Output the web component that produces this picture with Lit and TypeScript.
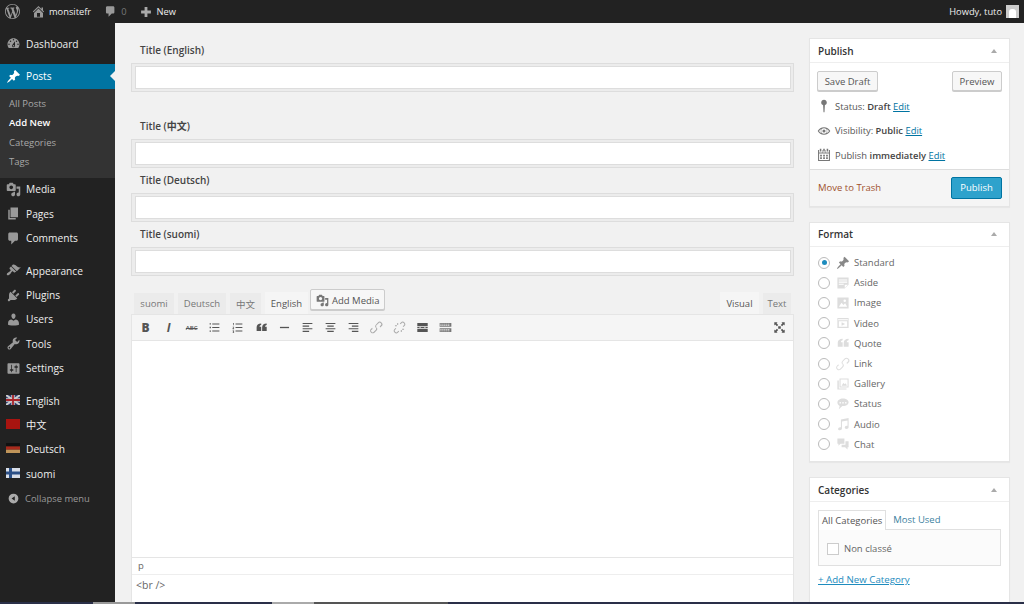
import { LitElement, html, css, svg } from "lit";
import { customElement } from "lit/decorators.js";

const P: Record<string, string> = {
  wp: "M20 10c0-5.51-4.49-10-10-10C4.48 0 0 4.49 0 10c0 5.52 4.48 10 10 10 5.51 0 10-4.48 10-10zM7.78 15.37L4.37 6.22c.55-.02 1.17-.08 1.17-.08.5-.06.44-1.13-.06-1.11 0 0-1.45.11-2.37.11-.18 0-.37 0-.58-.01C4.12 2.69 6.87 1.11 10 1.11c2.33 0 4.45.87 6.05 2.34-.68-.11-1.65.39-1.65 1.58 0 .74.45 1.36.9 2.1.35.61.55 1.36.55 2.46 0 1.49-1.4 5-1.4 5l-3.03-8.37c.54-.02.82-.17.82-.17.5-.05.44-1.25-.06-1.22 0 0-1.44.12-2.38.12-.87 0-2.33-.12-2.33-.12-.5-.03-.56 1.2-.06 1.22l.92.08 1.26 3.41zM17.41 10c.24-.64.74-1.87.43-4.25.7 1.29 1.05 2.71 1.05 4.25 0 3.29-1.73 6.24-4.4 7.78.97-2.59 1.94-5.2 2.92-7.78zM6.1 18.09C3.12 16.65 1.11 13.53 1.11 10c0-1.3.23-2.48.72-3.59C3.25 10.3 4.67 14.2 6.1 18.09zm4.03-6.63l2.58 6.98c-.86.29-1.76.45-2.71.45-.79 0-1.57-.11-2.29-.33.81-2.38 1.62-4.74 2.42-7.1z",
  home: "M16 8.5l1.53 1.53-1.06 1.06L10 4.62l-6.47 6.47-1.06-1.06L10 2.5l4 4v-2h2v4zm-6-2.46l6 5.99V18H4v-5.97zM12 17v-5H8v5h4z",
  plus: "M17 8v4h-5v5H8v-5H3V8h5V3h4v5h5z",
  dashboard: "M3.76 16h12.48c1.1-1.37 1.76-3.11 1.76-5 0-4.42-3.58-8-8-8s-8 3.58-8 8c0 1.89.66 3.63 1.76 5zM10 4c.55 0 1 .45 1 1s-.45 1-1 1-1-.45-1-1 .45-1 1-1zM6 6c.55 0 1 .45 1 1s-.45 1-1 1-1-.45-1-1 .45-1 1-1zm8 0c.55 0 1 .45 1 1s-.45 1-1 1-1-.45-1-1 .45-1 1-1zm-5.37 5.55L12 7v6c0 1.1-.9 2-2 2s-2-.9-2-2c0-.57.24-1.08.63-1.45zM4 10c.55 0 1 .45 1 1s-.45 1-1 1-1-.45-1-1 .45-1 1-1zm12 0c.55 0 1 .45 1 1s-.45 1-1 1-1-.45-1-1 .45-1 1-1zm-5 3c0-.55-.45-1-1-1s-1 .45-1 1 .45 1 1 1 1-.45 1-1z",
  pin: "M10.44 3.02l1.82-1.82 6.36 6.35-1.83 1.82c-1.05-.68-2.48-.57-3.41.36l-.75.75c-.92.93-1.04 2.35-.35 3.41l-1.83 1.82-2.41-2.41-2.8 2.79c-.42.42-3.38 2.71-3.8 2.29s1.86-3.39 2.28-3.81l2.79-2.79L4.1 9.36l1.83-1.82c1.05.69 2.48.57 3.4-.36l.75-.75c.93-.92 1.05-2.35.36-3.41z",
  media: "M13 11V4c0-.55-.45-1-1-1h-1.67L9 1H5L3.67 3H2c-.55 0-1 .45-1 1v7c0 .55.45 1 1 1h10c.55 0 1-.45 1-1zM7 4.5c1.38 0 2.5 1.12 2.5 2.5S8.38 9.5 7 9.5 4.5 8.38 4.5 7 5.62 4.5 7 4.5zM14 6h5v10.5c0 1.38-1.12 2.5-2.5 2.5S14 17.88 14 16.5s1.12-2.5 2.5-2.5c.17 0 .34.02.5.05V9h-3V6zm-4 8.05V13h2v3.5c0 1.38-1.12 2.5-2.5 2.5S7 17.88 7 16.5 8.12 14 9.5 14c.17 0 .34.02.5.05z",
  pages: "M6 15V2h10v13H6zm-1 1h8v2H3V5h2v11z",
  comment: "M5 2h9c1.1 0 2 .9 2 2v7c0 1.1-.9 2-2 2h-2l-5 5v-5H5c-1.1 0-2-.9-2-2V4c0-1.1.9-2 2-2z",
  appearance: "M14.48 11.06L7.41 3.99l1.5-1.5c.5-.56 2.3-.47 3.51.32 1.21.8 1.43 1.28 2.91 2.1 1.18.64 2.45 1.26 4.45.85zm-.71.71L6.7 4.7 4.93 6.47c-.39.39-.39 1.02 0 1.41l1.06 1.06c.39.39.39 1.03 0 1.42-.6.6-1.43 1.11-2.21 1.69-.35.26-.7.53-1.01.84C1.43 13.23.4 14.98 1.4 15.98s2.75-.03 4.09-1.36c.31-.31.58-.66.85-1.02.57-.78 1.08-1.6 1.69-2.21.39-.39 1.02-.39 1.41 0l1.06 1.06c.39.39 1.02.39 1.41 0z",
  plugins: "M13.11 4.36L9.87 7.6 8 5.73l3.24-3.24c.35-.34 1.05-.2 1.56.32.52.51.66 1.21.31 1.55zm-8 1.77l.91-1.12 9.01 9.01-1.19.84c-.71.71-2.63 1.16-3.82 1.16H6.14L4.9 17.26c-.59.59-1.54.59-2.12 0-.59-.58-.59-1.53 0-2.12l1.24-1.24v-3.88c0-1.13.4-3.19 1.09-3.89zm7.26 3.97l3.24-3.24c.34-.35 1.04-.21 1.55.31.52.51.66 1.21.31 1.55l-3.24 3.25z",
  users: "M10 9.25c-2.27 0-2.73-3.44-2.73-3.44C7 4.02 7.82 2 9.97 2c2.16 0 2.98 2.02 2.71 3.81 0 0-.41 3.44-2.68 3.44zm0 2.57L12.72 10c2.39 0 4.52 2.33 4.52 4.53v2.49s-3.65 1.13-7.24 1.13c-3.65 0-7.24-1.13-7.24-1.13v-2.49c0-2.25 1.94-4.48 4.47-4.48z",
  tools: "M16.68 9.77c-1.34 1.34-3.3 1.67-4.95.99l-5.41 6.52c-.99.99-2.59.99-3.58 0s-.99-2.59 0-3.57l6.52-5.42c-.68-1.65-.35-3.61.99-4.95 1.28-1.28 3.12-1.62 4.72-1.06l-2.89 2.89 2.82 2.82 2.86-2.87c.53 1.58.18 3.39-1.08 4.65zM3.81 16.21c.4.39 1.04.39 1.43 0 .4-.4.4-1.04 0-1.43-.39-.4-1.03-.4-1.43 0-.39.39-.39 1.03 0 1.43z",
  settings: "M18 16V4c0-.55-.45-1-1-1H3c-.55 0-1 .45-1 1v12c0 .55.45 1 1 1h14c.55 0 1-.45 1-1zM8 11h1c.55 0 1 .45 1 1s-.45 1-1 1H8v1.5c0 .28-.22.5-.5.5s-.5-.22-.5-.5V13H6c-.55 0-1-.45-1-1s.45-1 1-1h1V5.5c0-.28.22-.5.5-.5s.5.22.5.5V11zm5-2h-1c-.55 0-1-.45-1-1s.45-1 1-1h1V5.5c0-.28.22-.5.5-.5s.5.22.5.5V7h1c.55 0 1 .45 1 1s-.45 1-1 1h-1v5.5c0 .28-.22.5-.5.5s-.5-.22-.5-.5V9z",
  collapse: "M10 2.5a7.5 7.5 0 1 0 0 15 7.5 7.5 0 0 0 0-15zM12 6.5v7L7 10z",
  location: "M10 1c-2.300 0-4 1.700-4 3.900 0 1.800 1.100 3.200 2.700 3.700L9.300 19h1.400l.6-10.400c1.600-.5 2.700-1.900 2.700-3.700C14 2.700 12.300 1 10 1z",
  eye: "M10 4.500c-4 0-7.200 2.400-9 5.500 1.800 3.100 5 5.500 9 5.500s7.200-2.400 9-5.500c-1.800-3.100-5-5.500-9-5.500zm0 9.500a4 4 0 1 1 0-8 4 4 0 0 1 0 8zm0-6.200a2.200 2.200 0 1 0 0 4.400 2.200 2.200 0 0 0 0-4.400zM2.800 10c.9-1.300 2-2.300 3.400-3a5.200 5.200 0 0 0 0 6c-1.400-.7-2.500-1.700-3.400-3zm14.400 0c-.9 1.300-2 2.300-3.400 3a5.200 5.200 0 0 0 0-6c1.400.7 2.500 1.700 3.400 3z",
  calendar: "M4 1h2.200v4H4zM8.900 1h2.200v4H8.900zM13.800 1H16v4h-2.200zM1.500 3H3v3.500h4.200V3h.7v3.500h4.200V3h.7v3.500H17V3h1.500v15.500h-17zM3 8v9h14V8zM4.500 9.500h2.500v2.500H4.500zM8.800 9.500h2.500v2.500H8.800zM13 9.500h2.500v2.500H13zM4.500 13.300h2.500v2.500H4.500zM8.800 13.300h2.500v2.500H8.800zM13 13.300h2.500v2.500H13z",
  aside: "M2 2h16v10.500L12.500 18H2zM4 5v1.500h12V5zM4 8v1.500h12V8zM4 11v1.500h7V11zM12.500 17v-4.500H17z",
  image: "M2 2h16v16H2zM4 15.500h12l-3-5-2.500 2.500L8 9.500zM12.500 5a1.800 1.800 0 1 0 0 3.600 1.800 1.800 0 0 0 0-3.600z",
  video: "M2 3h16v14H2zM3 4.500V6h14V4.500zM4 7.500v8h12v-8zM8 9l5 2.500L8 14z",
  quote: "M9.500 4v2.200C7.500 6.700 7 7.800 7 9h2.500v6.500H2.500V9.500C2.500 6.500 5 4 9.500 4zm8.500 0v2.200c-2 .5-2.500 1.600-2.500 2.800H18v6.500h-7V9.500C11 6.500 13.500 4 18 4z",
  link: "M17.700 2.300a3.900 3.900 0 0 0-5.500 0L9.300 5.200a3.900 3.900 0 0 0 0 5.500l1-1a2.400 2.400 0 0 1 0-3.500l2.900-2.900a2.400 2.400 0 0 1 3.400 3.400L15 8.300l.7 1.800 2-2a3.900 3.900 0 0 0 0-5.800zM9.700 9.300l-1 1a2.400 2.400 0 0 1 0 3.500l-2.900 2.900a2.400 2.400 0 0 1-3.400-3.400L4 12.200l-.7-1.800-2 2a3.900 3.900 0 0 0 5.500 5.500l2.900-2.900a3.900 3.900 0 0 0 0-5.700z",
  unlink: "M17.700 2.300a3.900 3.900 0 0 0-5.500 0L10.500 4l1 1 1.700-1.700a2.400 2.400 0 0 1 3.400 3.400L15 8.400l1 1 1.700-1.700a3.900 3.900 0 0 0 0-5.400zM2.300 17.700a3.900 3.900 0 0 0 5.500 0L9.500 16l-1-1-1.700 1.700a2.400 2.400 0 0 1-3.400-3.400L5 11.600l-1-1-1.700 1.700a3.900 3.900 0 0 0 0 5.400zM3 6.500h3V8H3zM6.500 3H8v3H6.500zM14 12h3v1.500h-3zM12 14h1.500v3H12z",
  gallery: "M5 2h13v13H5zM6.500 3.500v10h10v-10zM2 5h2v11.500h11V18H2zM8 12.500l2.500-4 2 2 1.500-1.500 1.500 3.500z",
  status: "M10 2C5.600 2 2 4.700 2 8c0 2 1.300 3.700 3.300 4.800L4 17.500l5-4.500h1c4.400 0 8-2.300 8-5.500S14.400 2 10 2zM6 7a1.200 1.200 0 1 1 0 2.400A1.200 1.200 0 0 1 6 7zm4 0a1.200 1.200 0 1 1 0 2.400A1.200 1.200 0 0 1 10 7zm4 0a1.200 1.200 0 1 1 0 2.400A1.200 1.200 0 0 1 14 7z",
  audio: "M7 3.500 18 1.500v13c0 1.400-1.300 2.500-3 2.500s-2.500-1-2.500-2 1-2.500 3-2.500c.4 0 .7 0 1 .1V5L8.500 6.500v10c0 1.400-1.300 2.500-3 2.500S3 18 3 17s1-2.500 3-2.500c.4 0 .7 0 1 .1z",
  chat: "M2 2h10v7.500H6.500L3.500 12.500V9.500H2zM13.500 6H18v8.500h-1.500V18l-3.500-3.500H8V11h5.500z",
  fullscreen: "M2 2h5L5.500 3.500 8 6 6 8 3.500 5.500 2 7zM18 2v5l-1.500-1.500L14 8l-2-2 2.500-2.500L13 2zM2 18v-5l1.500 1.500L6 12l2 2-2.500 2.500L7 18zM18 18h-5l1.500-1.500L12 14l2-2 2.500 2.500L18 13zM8 8h4v4H8z",
  ul: "M6.500 4h11v1.200h-11zM6.500 9.400h11v1.200h-11zM6.500 14.800h11V16h-11zM2.500 3.500h2v2h-2zM2.500 9h2v2h-2zM2.500 14.500h2v2h-2z",
  ol: "M7 4h10.500v1.200H7zM7 9.400h10.500v1.200H7zM7 14.800h10.500V16H7zM3 3h1.500v3.500H3.500V4H3zM2.500 9h2.200v2.500H3.500v.5h1.200v.8h-2.200v-2.100h1.200v-.9H2.500zM2.500 14.500h2.200v4h-2.200v-.8h1.200v-.8H2.800v-.7h.9v-.9H2.500z",
  hr: "M3 9h14v2H3z",
  left: "M2.500 3h15v1.800h-15zM2.500 7h10v1.800h-10zM2.500 11h15v1.800h-15zM2.500 15h10v1.800h-10z",
  center: "M2.500 3h15v1.800h-15zM5 7h10v1.800H5zM2.500 11h15v1.800h-15zM5 15h10v1.800H5z",
  right: "M2.500 3h15v1.800h-15zM7.500 7h10v1.800h-10zM2.500 11h15v1.800h-15zM7.500 15h10v1.800h-10z",
  more: "M2 3h16v5H2zM2 12h16v5H2zM2 9.200h3.500v1.600H2zM7 9.200h6v1.600H7zM14.500 9.200H18v1.600h-3.500z",
  kitchen: "M1 3h18v6H1zM2 4.200v1.300h2V4.200zm3 0v1.300h2V4.200zm3 0v1.300h2V4.200zm3 0v1.300h2V4.200zm3 0v1.300h2V4.200zM2 6.500v1.300h2V6.500zm3 0v1.300h2V6.500zm3 0v1.300h2V6.500zm3 0v1.300h2V6.500zm3 0v1.300h2V6.500zM1 11h18v6H1zM2 12.200v1.300h2v-1.300zm3 0v1.300h2v-1.300zm3 0v1.300h2v-1.300zm3 0v1.300h2v-1.300zm3 0v1.300h2v-1.300zM2 14.500v1.300h2v-1.300zm3 0v1.300h2v-1.300zm3 0v1.300h2v-1.300zm3 0v1.300h2v-1.300zm3 0v1.300h2v-1.300z",
};

const ico = (n: string, cls = "") =>
  html`<svg class="ico ${cls}" viewBox="0 0 20 20" aria-hidden="true"><path fill-rule="evenodd" d=${P[n]}></path></svg>`;

const flags: Record<string, unknown> = {
  gb: svg`<rect width="14" height="10" fill="#2c3c70"/><path d="M0 0l14 10M14 0L0 10" stroke="#ccc" stroke-width="2"/><path d="M7 0v10M0 5h14" stroke="#ccc" stroke-width="3.400"/><path d="M7 0v10M0 5h14" stroke="#a8242a" stroke-width="1.800"/>`,
  cn: svg`<rect width="14" height="10" fill="#a81410"/>`,
  de: svg`<rect width="14" height="3.400" fill="#111"/><rect y="3.400" width="14" height="3.300" fill="#a82a1c"/><rect y="6.700" width="14" height="3.300" fill="#c0955a"/>`,
  fi: svg`<rect width="14" height="10" fill="#d8dee8"/><path d="M4.500 0v10M0 5h14" stroke="#2b4f86" stroke-width="3"/>`,
};

const menu1 = [
  ["media", "Media"],
  ["pages", "Pages"],
  ["comment", "Comments"],
];
const menu2 = [
  ["appearance", "Appearance"],
  ["plugins", "Plugins"],
  ["users", "Users"],
  ["tools", "Tools"],
  ["settings", "Settings"],
];
const langs = [
  ["gb", "English"],
  ["cn", "中文"],
  ["de", "Deutsch"],
  ["fi", "suomi"],
];
const formats = [
  ["pin", "Standard"],
  ["aside", "Aside"],
  ["image", "Image"],
  ["video", "Video"],
  ["quote", "Quote"],
  ["link", "Link"],
  ["gallery", "Gallery"],
  ["status", "Status"],
  ["audio", "Audio"],
  ["chat", "Chat"],
];
const titles = [
  ["Title (English)", "t0"],
  ["Title (中文)", "t1"],
  ["Title (Deutsch)", "t2"],
  ["Title (suomi)", "t3"],
];

@customElement("app-root")
export class AppRoot extends LitElement {
  static styles = css`
    :host {
      display: block;
      width: 1024px;
      height: 604px;
      overflow: hidden;
      position: relative;
      background: #f1f1f1;
      font-family: "Open Sans", "Noto Sans CJK SC", sans-serif;
      font-size: 10px;
      color: #555;
    }
    * { box-sizing: border-box; }
    .ico { display: block; fill: currentColor; flex: none; }
    a { color: #0074a2; text-decoration: underline; }

    .bar {
      height: 23px;
      background: #222;
      color: #eee;
      display: flex;
      align-items: center;
      padding: 0 5px 0 5px;
      font-size: 9.300px;
    }
    .bar .ico { color: #999; }
    .bar .wp { width: 15px; height: 15px; margin-right: 11px; }
    .bar .hm { width: 15px; height: 15px; margin-right: 3px; }
    .bar .cm { width: 13px; height: 13px; margin: 0 4px 0 13px; }
    .bar .zero { color: #777; }
    .bar .pl { width: 14px; height: 14px; margin: 0 3px 0 13px; color: #aaa; }
    .bar .howdy { margin-left: auto; margin-right: 4px; }
    .avatar {
      width: 13px;
      height: 13px;
      background: #ccc;
      display: flex;
      align-items: flex-end;
      justify-content: center;
    }
    .avatar i { width: 7px; height: 9px; background: #fff; border-radius: 3px 3px 0 0; }

    .layout { display: flex; height: 579px; }
    .side {
      width: 115px;
      flex: none;
      background: #222;
      color: #eee;
      font-size: 10.200px;
      padding-top: 9px;
    }
    .item {
      height: 24.400px;
      display: flex;
      align-items: center;
      padding: 0 0 1px 6px;
      gap: 5px;
    }
    .item .ico { width: 15px; height: 15px; color: #999; }
    .item.cur {
      background: #0074a2;
      color: #fff;
      margin-top: 8px;
      position: relative;
    }
    .item.cur .ico { color: #fff; }
    .item.cur::after {
      content: "";
      position: absolute;
      right: 0;
      top: 7px;
      border: 5px solid transparent;
      border-right-color: #f1f1f1;
      border-left: 0;
    }
    .sub {
      background: #333;
      height: 89px;
      padding: 5px 0 0 9px;
      font-size: 9.500px;
      color: #a8a8a8;
      display: flex;
      flex-direction: column;
    }
    .sub div { height: 19.400px; display: flex; align-items: center; }
    .sub .on { color: #fff; font-weight: 600; }
    .gap { height: 8px; }
    .flag { width: 14px; height: 10px; flex: none; display: block; margin: -2px 1px 0 0; }
    .collapse {
      display: flex;
      align-items: center;
      height: 24px;
      font-size: 9.400px;
      color: #999;
      padding: 1px 0 0 7px;
      gap: 5px;
    }
    .collapse .ico { width: 13px; height: 13px; color: #aaa; }

    .main {
      flex: 1;
      display: flex;
      padding: 15px 14px 0 16px;
      gap: 15px;
      overflow: hidden;
      min-width: 0;
    }
    .col { width: 663px; flex: none; display: flex; flex-direction: column; }
    .label {
      font-size: 10px;
      font-weight: 600;
      color: #444;
      height: 25px;
      padding: 5px 0 0 9px;
      line-height: 14px;
    }
    .input {
      height: 29px;
      border: 1px solid #ddd;
      padding: 2px 2px 2px 3px;
      background: #ececec;
    }
    .input div { height: 100%; background: #fff; border: 1px solid #ddd; }
    .t0 { margin-bottom: 22px; }
    .t3 { margin-bottom: 16px; }

    .tabs { display: flex; align-items: flex-end; height: 22px; position: relative; padding: 0 3px; }
    .tab {
      height: 21px;
      background: #ebebeb;
      color: #777;
      font-size: 9.500px;
      display: flex;
      align-items: center;
      justify-content: center;
      margin-right: 4px;
    }
    .tab.on { background: #f5f5f5; color: #555; height: 22px; }
    .addmedia {
      position: absolute;
      left: 179px;
      top: -3px;
      width: 75px;
      height: 21px;
      border: 1px solid #ccc;
      border-radius: 2px;
      background: #f7f7f7;
      box-shadow: 0 1px 0 #ccc;
      display: flex;
      align-items: center;
      gap: 3px;
      padding: 1px 0 0 5px;
      font-size: 9.500px;
      color: #555;
    }
    .addmedia .ico { width: 13px; height: 13px; color: #777; }
    .sp { flex: 1; }
    .editor { border: 1px solid #e5e5e5; border-bottom: 0; }
    .tools {
      height: 26px;
      background: #f5f5f5;
      border-bottom: 1px solid #e5e5e5;
      display: flex;
      align-items: center;
      padding: 0 0 0 2px;
      color: #555;
    }
    .tb { width: 23.100px; display: flex; justify-content: center; align-items: center; flex: none; }
    .tb .ico { width: 13px; height: 13px; }
    .tb.lt { color: #aaa; }
    .tb.mid { color: #777; }
    .tb b, .tb i { font-size: 12px; line-height: 1; color: #555; }
    .tb b { font-weight: 800; }
    .tb i { font-style: italic; font-weight: 700; }
    .tb s { font-size: 6px; font-weight: 600; }
    .fs { margin-left: auto; margin-right: 2px; }
    .area { height: 216px; background: #fff; }
    .path { height: 17px; background: #fff; border-top: 1px solid #e5e5e5; padding-left: 6px; font-size: 9.500px; color: #666; line-height: 16px; }
    .code { height: 30px; background: #fff; border-top: 1px solid #eee; padding: 3px 0 0 4px; font-size: 10.500px; color: #666; }

    .right { width: 201px; flex: none; display: flex; flex-direction: column; gap: 15px; }
    .box { background: #fff; border: 1px solid #e5e5e5; box-shadow: 0 1px 1px rgba(0,0,0,.04); }
    .head {
      height: 24px;
      border-bottom: 1px solid #eee;
      display: flex;
      align-items: center;
      justify-content: space-between;
      padding: 0 12px 0 8px;
      font-size: 10px;
      font-weight: 600;
      color: #333;
    }
    .head i { border: 3.500px solid transparent; border-bottom: 4px solid #aaa; border-top: 0; }
    .btns { display: flex; justify-content: space-between; padding: 8px 7px 0 7px; }
    .btn {
      height: 20px;
      border: 1px solid #ccc;
      border-radius: 2px;
      background: #f7f7f7;
      box-shadow: 0 1px 0 #ccc;
      font-size: 9.500px;
      color: #555;
      display: flex;
      align-items: center;
      justify-content: center;
    }
    .row { height: 24.500px; display: flex; align-items: center; gap: 4px; padding-left: 7px; font-size: 9.400px; color: #555; }
    .row .ico { width: 14px; height: 14px; color: #777; }
    .row b { font-weight: 600; color: #444; }
    .rows { padding-top: 3px; }
    .actions {
      height: 37px;
      margin-top: 1px;
      background: #f5f5f5;
      border-top: 1px solid #ddd;
      display: flex;
      align-items: center;
      justify-content: space-between;
      padding: 0 7px 0 8px;
      font-size: 9.500px;
      color: #a0522d;
    }
    .publish {
      width: 51px;
      height: 22px;
      background: #2ea2cc;
      border: 1px solid #0074a2;
      border-radius: 2px;
      color: #fff;
      display: flex;
      align-items: center;
      justify-content: center;
    }
    .fmts { padding: 6px 0 7px 8px; }
    .fmt { height: 20.200px; display: flex; align-items: center; font-size: 9.500px; color: #666; }
    .radio {
      width: 12px;
      height: 12px;
      border: 1px solid #bbb;
      border-radius: 50%;
      background: #fff;
      margin-right: 6px;
      display: flex;
      align-items: center;
      justify-content: center;
      flex: none;
    }
    .radio i { width: 5px; height: 5px; border-radius: 50%; background: #1e8cbe; }
    .fmt .ico { width: 14px; height: 14px; color: #ddd; margin-right: 4px; }
    .fmt.on .ico { color: #888; }
    .cats { padding: 7px 8px 40px 8px; }
    .ctabs { display: flex; height: 20px; font-size: 9.500px; align-items: center; color: #3d7fa0; }
    .ctab {
      height: 20px;
      padding: 0 3px;
      border: 1px solid #e0e0e0;
      border-bottom: 0;
      background: #fff;
      color: #555;
      display: flex;
      align-items: center;
      margin-right: 7px;
      position: relative;
      z-index: 1;
      margin-bottom: -1px;
    }
    .cbox {
      height: 37px;
      border: 1px solid #e0e0e0;
      background: #fbfbfb;
      display: flex;
      align-items: center;
      padding: 2px 0 0 8px;
      font-size: 9.500px;
      color: #666;
      gap: 5px;
    }
    .check { width: 12px; height: 12px; border: 1px solid #ccc; background: #fff; }
    .add { display: block; margin-top: 7px; font-size: 9.700px; color: #1e8cbe; }
    .strip { height: 2px; display: flex; background: #2a2f48; }
    .strip span { flex: none; }
    .s1 { width: 93px; }
    .s2 { width: 42px; background: #999; }
    .s3 { width: 137px; }
    .s4 { width: 42px; background: #aaa; }
    .s5 { width: 134px; background: #555; }
  `;

  private tb(n: string, cls = "") {
    return html`<span class="tb ${cls}">${ico(n)}</span>`;
  }

  render() {
    return html`
      <div class="bar">
        ${ico("wp", "wp")} ${ico("home", "hm")}<span>monsitefr</span>
        ${ico("comment", "cm")}<span class="zero">0</span>
        ${ico("plus", "pl")}<span>New</span>
        <span class="howdy">Howdy, tuto</span>
        <span class="avatar"><i></i></span>
      </div>
      <div class="layout">
        <nav class="side">
          <div class="item">${ico("dashboard")}Dashboard</div>
          <div class="item cur">${ico("pin")}Posts</div>
          <div class="sub">
            <div>All Posts</div>
            <div class="on">Add New</div>
            <div>Categories</div>
            <div>Tags</div>
          </div>
          ${menu1.map(([i, t]) => html`<div class="item">${ico(i)}${t}</div>`)}
          <div class="gap"></div>
          ${menu2.map(([i, t]) => html`<div class="item">${ico(i)}${t}</div>`)}
          <div class="gap"></div>
          ${langs.map(
            ([f, t]) =>
              html`<div class="item"><svg class="flag" viewBox="0 0 14 10">${flags[f]}</svg>${t}</div>`
          )}
          <div class="collapse">${ico("collapse")}Collapse menu</div>
        </nav>
        <div class="main">
          <div class="col">
            ${titles.map(
              ([t, c]) => html`
                <div class=${c}>
                  <div class="label">${t}</div>
                  <div class="input"><div></div></div>
                </div>
              `
            )}
            <div class="tabs">
              <span class="tab" style="width:40px">suomi</span>
              <span class="tab" style="width:48px">Deutsch</span>
              <span class="tab" style="width:31px">中文</span>
              <span class="tab on" style="width:43px">English</span>
              <span class="addmedia">${ico("media")}Add Media</span>
              <span class="sp"></span>
              <span class="tab on" style="width:39px">Visual</span>
              <span class="tab" style="width:28px;margin-right:0">Text</span>
            </div>
            <div class="editor">
              <div class="tools">
                <span class="tb"><b>B</b></span>
                <span class="tb"><i>I</i></span>
                <span class="tb"><s>ABC</s></span>
                ${this.tb("ul")}${this.tb("ol")}${this.tb("quote")}${this.tb("hr")}
                ${this.tb("left")}${this.tb("center")}${this.tb("right")}
                ${this.tb("link", "lt")}${this.tb("unlink", "lt")}${this.tb("more")}${this.tb("kitchen", "mid")}
                <span class="tb fs">${ico("fullscreen")}</span>
              </div>
              <div class="area"></div>
              <div class="path">p</div>
              <div class="code">&lt;br /&gt;</div>
            </div>
          </div>
          <div class="right">
            <section class="box">
              <div class="head">Publish<i></i></div>
              <div class="btns">
                <span class="btn" style="width:61px">Save Draft</span>
                <span class="btn" style="width:50px">Preview</span>
              </div>
              <div class="rows">
                <div class="row">${ico("location")}<span>Status: <b>Draft</b> <a>Edit</a></span></div>
                <div class="row">${ico("eye")}<span>Visibility: <b>Public</b> <a>Edit</a></span></div>
                <div class="row">${ico("calendar")}<span>Publish <b>immediately</b> <a>Edit</a></span></div>
              </div>
              <div class="actions"><span>Move to Trash</span><span class="publish">Publish</span></div>
            </section>
            <section class="box">
              <div class="head">Format<i></i></div>
              <div class="fmts">
                ${formats.map(
                  ([i, t], n) => html`
                    <div class="fmt ${n === 0 ? "on" : ""}">
                      <span class="radio">${n === 0 ? html`<i></i>` : ""}</span>${ico(i)}${t}
                    </div>
                  `
                )}
              </div>
            </section>
            <section class="box">
              <div class="head">Categories<i></i></div>
              <div class="cats">
                <div class="ctabs"><span class="ctab">All Categories</span><span>Most Used</span></div>
                <div class="cbox"><span class="check"></span>Non classé</div>
                <a class="add">+ Add New Category</a>
              </div>
            </section>
          </div>
        </div>
      </div>
      <div class="strip">
        <span class="s1"></span><span class="s2"></span><span class="s3"></span><span class="s4"></span><span class="s5"></span>
      </div>
    `;
  }
}
